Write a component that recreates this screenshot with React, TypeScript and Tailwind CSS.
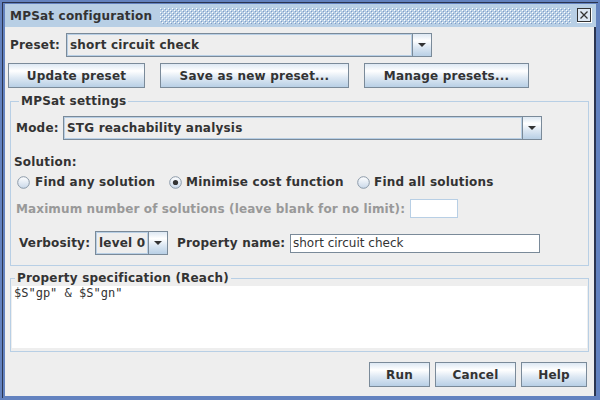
import React from "react"

const btn =
  "flex shrink-0 items-center justify-center border border-[#7a8a99] bg-[linear-gradient(to_bottom,#dde8f3_0%,#ffffff_30%,#dde8f3_60%,#b8cfe5_100%)] font-bold text-[12px] text-[#333333] whitespace-nowrap"

const Arrow = () => (
  <svg width="8" height="4" viewBox="0 0 8 4">
    <path d="M0 0h8L4 4z" fill="#333333" />
  </svg>
)

const Combo = ({ text, w }: { text: string; w: string }) => (
  <div className={`flex h-[24px] shrink-0 ${w} border border-[#7a8a99] bg-[#eeeeee]`}>
    <div className="flex min-w-0 flex-1 items-center whitespace-nowrap border border-[#b8cfe5] px-[2px] text-[12px] font-bold">
      {text}
    </div>
    <div className="flex w-[19px] shrink-0 items-center justify-center border-l border-[#7a8a99] bg-[linear-gradient(to_bottom,#dde8f3_0%,#ffffff_30%,#dde8f3_60%,#b8cfe5_100%)]">
      <Arrow />
    </div>
  </div>
)

const Radio = ({ checked }: { checked?: boolean }) => (
  <svg width="13" height="13" viewBox="0 0 13 13" className="shrink-0">
    <defs>
      <linearGradient id="rg" x1="0" y1="0" x2="0" y2="1">
        <stop offset="0" stopColor="#ffffff" />
        <stop offset="1" stopColor="#c9d8e9" />
      </linearGradient>
    </defs>
    <circle cx="6.5" cy="6.5" r="5.8" fill="url(#rg)" stroke="#8a99a8" strokeWidth="1" />
    {checked && <circle cx="6.5" cy="6.5" r="2.6" fill="#333333" />}
  </svg>
)

const Bumps = () => (
  <svg className="h-[16px] flex-1" preserveAspectRatio="none">
    <defs>
      <pattern id="bp" width="4" height="4" patternUnits="userSpaceOnUse">
        <rect x="0" y="0" width="1" height="1" fill="#ffffff" />
        <rect x="2" y="2" width="1" height="1" fill="#ffffff" />
        <rect x="1" y="1" width="1" height="1" fill="#7f9cc9" />
        <rect x="3" y="3" width="1" height="1" fill="#7f9cc9" />
      </pattern>
    </defs>
    <rect width="100%" height="100%" fill="url(#bp)" />
  </svg>
)

export default function App() {
  return (
    <div className="h-[400px] w-[600px] bg-[#6382bf] p-[2px] font-['DejaVu_Sans',sans-serif] tracking-[0.2px] text-[#333333]">
      <div className="flex h-full flex-col border-l border-t border-[#2b3550] pb-[2px] pl-[2px] pr-[2px] pt-[1px]">
        {/* title bar */}
        <div className="flex h-[23px] items-center bg-[#b8cfe5] pl-[5px] pr-[4px]">
          <span className="text-[12px] font-bold leading-none tracking-[0.2px]">MPSat configuration</span>
          <div className="ml-[8px] mr-[6px] flex flex-1">
            <Bumps />
          </div>
          <svg width="15" height="15" viewBox="0 0 15 15">
            <rect x="0.5" y="0.5" width="14" height="14" fill="#ffffff" stroke="#ffffff" />
            <rect x="0.5" y="0.5" width="13" height="13" fill="#dde8f3" stroke="#333333" />
            <path d="M3.5 3.5L10.5 10.5M10.5 3.5L3.5 10.5" stroke="#333333" strokeWidth="1.3" />
          </svg>
        </div>

        {/* content */}
        <div className="flex flex-1 flex-col border-r-2 border-[#2b3550] bg-[#eeeeee] text-[12px]">
          <div className="mt-[6px] flex items-center pl-[5px]">
            <span className="w-[56px] font-bold">Preset:</span>
            <Combo text="short circuit check" w="w-[366px]" />
          </div>

          <div className="mt-[6px] flex pl-[3px]">
            <div className={`${btn} h-[25px] w-[137px]`}>Update preset</div>
            <div className={`${btn} ml-[15px] h-[25px] w-[189px]`}>Save as new preset...</div>
            <div className={`${btn} ml-[15px] h-[25px] w-[165px]`}>Manage presets...</div>
          </div>

          <fieldset className="mx-[5px] mt-[6px] h-[172px] border border-[#b8cfe5] px-[5px]">
            <legend className="ml-[3px] px-[2px] text-[12px] font-bold leading-[15px]">MPSat settings</legend>
            <div className="mt-[7px] flex items-center">
              <span className="w-[47px] font-bold">Mode:</span>
              <Combo text="STG reachability analysis" w="w-[479px]" />
            </div>
            <div className="ml-[-2px] mt-[15px] font-bold leading-[15px]">Solution:</div>
            <div className="mt-[3px] flex items-center pl-[1px] font-bold whitespace-nowrap">
              <Radio />
              <span className="ml-[5px] w-[134px]">Find any solution</span>
              <Radio checked />
              <span className="ml-[4px] w-[171px]">Minimise cost function</span>
              <Radio />
              <span className="ml-[4px]">Find all solutions</span>
            </div>
            <div className="mt-[8px] flex items-center whitespace-nowrap">
              <span className="w-[394px] font-bold tracking-[0.12px] text-[#999999]">Maximum number of solutions (leave blank for no limit):</span>
              <div className="h-[19px] w-[48px] border border-[#b8cfe5] bg-white" />
            </div>
            <div className="mt-[13px] flex items-center pl-[3px] whitespace-nowrap">
              <span className="w-[76px] font-bold">Verbosity:</span>
              <Combo text="level 0" w="w-[73px]" />
              <span className="ml-[9px] w-[113px] font-bold">Property name:</span>
              <div className="flex h-[19px] w-[250px] items-center border border-[#7a8a99] bg-white px-[2px] tracking-normal">
                short circuit check
              </div>
            </div>
          </fieldset>

          <fieldset className="mx-[5px] mt-[5px] h-[81px] border border-[#b8cfe5] px-[1px] pb-[2px]">
            <legend className="ml-[3px] px-[2px] text-[12px] font-bold leading-[15px]">Property specification (Reach)</legend>
            <div className="h-[62px] bg-white px-[2px] font-['DejaVu_Sans_Mono',monospace] text-[12px] leading-[15px] tracking-normal">
              $S"gp" &amp; $S"gn"
            </div>
          </fieldset>

          <div className="mt-[10px] flex justify-end pr-[7px]">
            <div className={`${btn} h-[25px] w-[61px]`}>Run</div>
            <div className={`${btn} ml-[5px] h-[25px] w-[81px]`}>Cancel</div>
            <div className={`${btn} ml-[5px] h-[25px] w-[66px]`}>Help</div>
          </div>
        </div>
      </div>
    </div>
  )
}
